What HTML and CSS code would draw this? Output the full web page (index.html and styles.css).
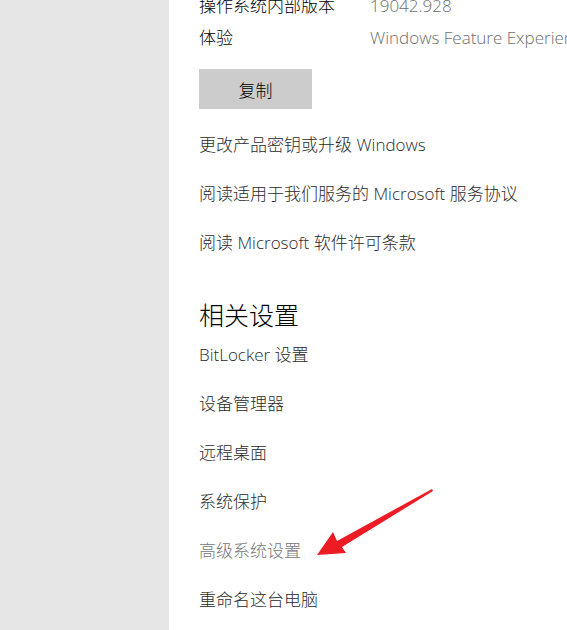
FILE: index.html
```html
<!DOCTYPE html>
<html lang="zh-CN">
<head>
<meta charset="utf-8">
<title>关于</title>
<link rel="stylesheet" href="styles.css">
</head>
<body>
<div class="app">
  <aside class="sidebar"></aside>
  <main class="content">
    <div class="spec">
      <div class="spec-row"><span class="spec-label">操作系统内部版本</span><span class="spec-value">19042.928</span></div>
      <div class="spec-row"><span class="spec-label">体验</span><span class="spec-value">Windows Feature Experience Pack 120.2212.551.0</span></div>
    </div>
    <button class="copy-btn">复制</button>
    <ul class="links">
      <li class="link">更改产品密钥或升级 Windows</li>
      <li class="link">阅读适用于我们服务的 Microsoft 服务协议</li>
      <li class="link">阅读 Microsoft 软件许可条款</li>
    </ul>
    <h2 class="section-title">相关设置</h2>
    <ul class="links related">
      <li class="link">BitLocker 设置</li>
      <li class="link">设备管理器</li>
      <li class="link">远程桌面</li>
      <li class="link">系统保护</li>
      <li class="link link-hover">高级系统设置</li>
      <li class="link">重命名这台电脑</li>
    </ul>
  </main>
  <svg class="arrow" width="567" height="630" viewBox="0 0 567 630" aria-hidden="true">
    <polygon points="317,555 333,532 337,541 432,489 433,491 342,547 346,553" fill="#ed1c24"/>
  </svg>
</div>
</body>
</html>
```

FILE: styles.css
```css
html, body {
  margin: 0;
  padding: 0;
  background: #ffffff;
}
body {
  width: 567px;
  height: 630px;
  overflow: hidden;
  font-family: "Open Sans", "Noto Sans CJK SC", sans-serif;
}
.app {
  position: relative;
  display: flex;
  height: 630px;
  overflow: hidden;
}
.sidebar {
  flex: 0 0 169px;
  background: #e6e6e6;
}
.content {
  flex: 1;
  padding-left: 30px;
  margin-top: -10px;
  min-width: 0;
  white-space: nowrap;
  font-weight: 300;
}
.spec-row {
  display: flex;
  height: 32px;
  line-height: 32px;
  font-size: 17px;
}
.spec-label {
  flex: 0 0 171px;
  color: #000;
}
.spec-value {
  color: #6e6e6e;
}
.copy-btn {
  display: block;
  margin-top: 15px;
  width: 113px;
  height: 40px;
  border: 0;
  background: #cccccc;
  color: #000;
  font-family: "Open Sans", "Noto Sans CJK SC", sans-serif;
  font-weight: 300;
  font-size: 17px;
  padding: 0;
}
.links {
  list-style: none;
  margin: 24px 0 0;
  padding: 0;
  display: flex;
  flex-direction: column;
  gap: 25px;
}
.link {
  font-size: 17px;
  line-height: 24px;
  height: 24px;
  color: #2b2b2b;
}
.section-title {
  margin: 43px 0 0;
  font-size: 25px;
  font-weight: 300;
  line-height: 34px;
  color: #000;
}
.links.related {
  margin-top: 11px;
}
.link-hover {
  color: #767676;
}
.arrow {
  position: absolute;
  left: 0;
  top: 0;
  pointer-events: none;
}
```
